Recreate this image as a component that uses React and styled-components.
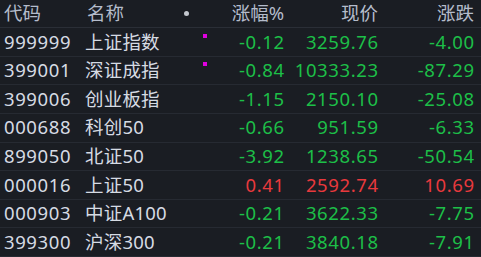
import React from "react";
import styled, { createGlobalStyle } from "styled-components";

const Global = createGlobalStyle`
  html, body { margin: 0; padding: 0; background: #1a1d23; }
  body { font-family: "Noto Sans", "Noto Sans CJK SC", sans-serif; }
`;

const Table = styled.div`
  width: 481px;
  height: 257px;
  background: #1a1d23;
  overflow: hidden;
`;

const cols = `81px 98px 22px 79px 94px 96px`;

const HeaderRow = styled.div`
  display: grid;
  grid-template-columns: ${cols};
  padding: 0 7px 0 4px;
  height: 27px;
  align-items: center;
  border-bottom: 1px solid #2a2e36;
  box-sizing: content-box;
  color: #b4bccb;
  font-size: 18.5px;
`;

const Row = styled.div`
  display: grid;
  grid-template-columns: ${cols};
  padding: 0 7px 0 4px;
  height: 28.625px;
  box-sizing: border-box;
  align-items: center;
  border-bottom: 1px solid #262a32;
  font-size: 18.5px;
`;

const Cell = styled.div`
  position: relative;
  white-space: nowrap;
  text-align: ${(p) => (p.$right ? "right" : "left")};
  color: ${(p) => p.$color || "inherit"};
  letter-spacing: ${(p) => (p.$num ? "0.6px" : "0")};
  margin-right: ${(p) => (p.$num ? "-0.6px" : "0")};
  line-height: 1;
`;

const Code = styled(Cell)`
  color: #d6dbe3;
  letter-spacing: 0.6px;
`;

const Name = styled(Cell)`
  color: #d6dbe3;
  letter-spacing: 0.2px;
`;

const HeadDot = styled.span`
  display: block;
  width: 5px;
  height: 5px;
  border-radius: 50%;
  background: #c4c8cf;
  margin-left: 1px;
`;

const Flag = styled.span`
  position: absolute;
  right: -2px;
  top: -8px;
  width: 4px;
  height: 4px;
  background: #e000e0;
`;

const GREEN = "#1dbf48";
const RED = "#e8393d";

const data = [
  ["999999", "上证指数", "-0.12", "3259.76", "-4.00", true],
  ["399001", "深证成指", "-0.84", "10333.23", "-87.29", true],
  ["399006", "创业板指", "-1.15", "2150.10", "-25.08", false],
  ["000688", "科创50", "-0.66", "951.59", "-6.33", false],
  ["899050", "北证50", "-3.92", "1238.65", "-50.54", false],
  ["000016", "上证50", "0.41", "2592.74", "10.69", false],
  ["000903", "中证A100", "-0.21", "3622.33", "-7.75", false],
  ["399300", "沪深300", "-0.21", "3840.18", "-7.91", false],
];

export default function App() {
  return (
    <>
      <Global />
      <Table>
        <HeaderRow>
          <Cell>代码</Cell>
          <Cell style={{ paddingLeft: 2 }}>名称</Cell>
          <Cell>
            <HeadDot />
          </Cell>
          <Cell $right>涨幅%</Cell>
          <Cell $right>现价</Cell>
          <Cell $right>涨跌</Cell>
        </HeaderRow>
        {data.map(([code, name, pct, price, chg, flag]) => {
          const c = pct.startsWith("-") ? GREEN : RED;
          return (
            <Row key={code}>
              <Code>{code}</Code>
              <Name>{name}</Name>
              <Cell>{flag && <Flag />}</Cell>
              <Cell $right $num $color={c}>{pct}</Cell>
              <Cell $right $num $color={c}>{price}</Cell>
              <Cell $right $num $color={c}>{chg}</Cell>
            </Row>
          );
        })}
      </Table>
    </>
  );
}
